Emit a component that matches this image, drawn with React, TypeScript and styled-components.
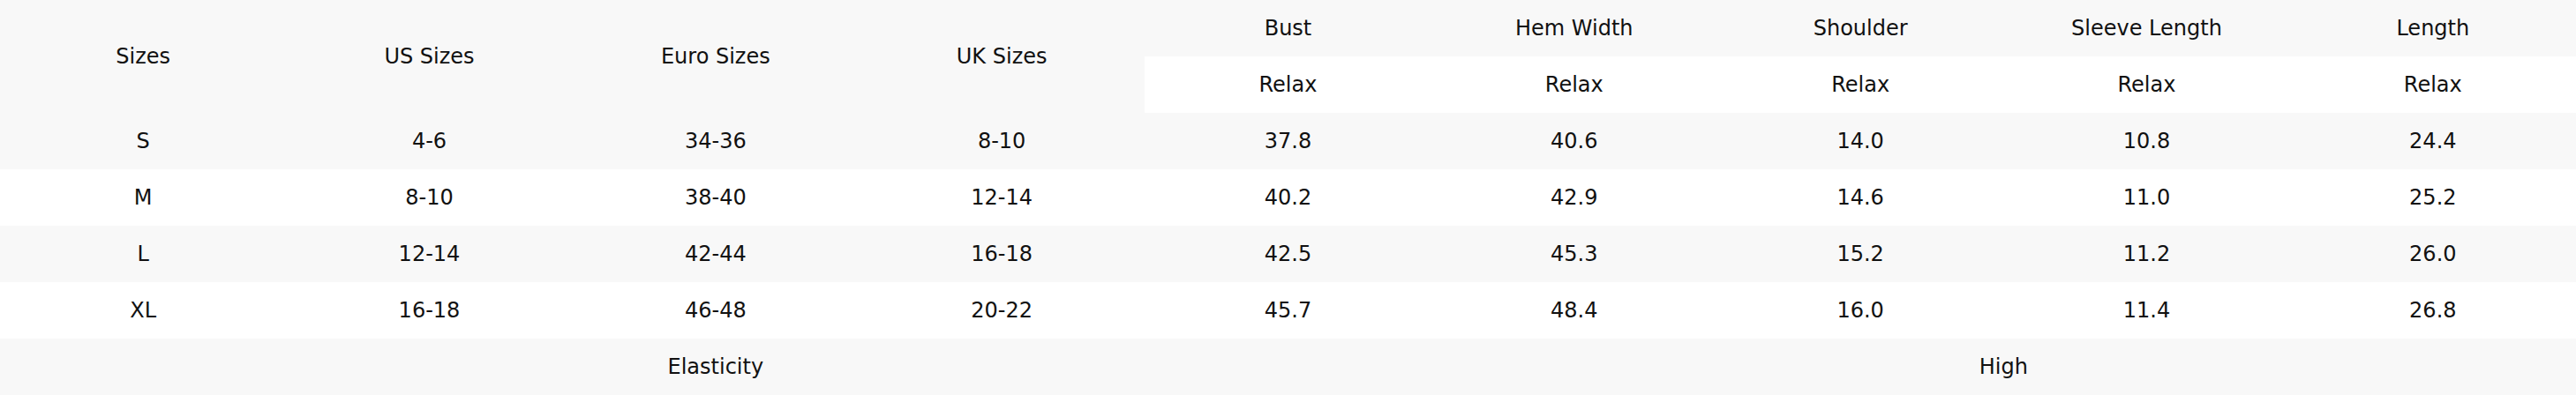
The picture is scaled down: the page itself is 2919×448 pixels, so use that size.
import styled, { createGlobalStyle } from "styled-components";

const GlobalStyle = createGlobalStyle`
  html, body {
    margin: 0;
    padding: 0;
    background: #ffffff;
  }
  body {
    font-family: "DejaVu Sans", "Liberation Sans", sans-serif;
    color: #111;
  }
`;

const measures = ["Bust", "Hem Width", "Shoulder", "Sleeve Length", "Length"];

const rows = [
  { size: "S", us: "4-6", euro: "34-36", uk: "8-10", values: ["37.8", "40.6", "14.0", "10.8", "24.4"] },
  { size: "M", us: "8-10", euro: "38-40", uk: "12-14", values: ["40.2", "42.9", "14.6", "11.0", "25.2"] },
  { size: "L", us: "12-14", euro: "42-44", uk: "16-18", values: ["42.5", "45.3", "15.2", "11.2", "26.0"] },
  { size: "XL", us: "16-18", euro: "46-48", uk: "20-22", values: ["45.7", "48.4", "16.0", "11.4", "26.8"] },
];

const SizeTable = styled.table`
  width: 100%;
  table-layout: fixed;
  border-collapse: collapse;
  border-spacing: 0;
  font-size: 24px;
`;

const Row = styled.tr<{ $shade?: boolean }>`
  background: ${(p) => (p.$shade ? "#f8f8f8" : "#ffffff")};
`;

const Cell = styled.td<{ $white?: boolean }>`
  height: 64px;
  padding: 0;
  text-align: center;
  vertical-align: middle;
  font-weight: normal;
  line-height: 1;
  ${(p) => (p.$white ? "background: #ffffff;" : "")}
`;

const HeadCell = styled(Cell).attrs({ as: "th" })``;

export default function App() {
  return (
    <>
      <GlobalStyle />
      <SizeTable>
        <thead>
          <Row $shade>
            <HeadCell rowSpan={2}>Sizes</HeadCell>
            <HeadCell rowSpan={2}>US Sizes</HeadCell>
            <HeadCell rowSpan={2}>Euro Sizes</HeadCell>
            <HeadCell rowSpan={2}>UK Sizes</HeadCell>
            {measures.map((m) => (
              <HeadCell key={m}>{m}</HeadCell>
            ))}
          </Row>
          <Row $shade>
            {measures.map((m) => (
              <HeadCell key={m} $white>
                Relax
              </HeadCell>
            ))}
          </Row>
        </thead>
        <tbody>
          {rows.map((r, i) => (
            <Row key={r.size} $shade={i % 2 === 0}>
              <Cell>{r.size}</Cell>
              <Cell>{r.us}</Cell>
              <Cell>{r.euro}</Cell>
              <Cell>{r.uk}</Cell>
              {r.values.map((v, j) => (
                <Cell key={j}>{v}</Cell>
              ))}
            </Row>
          ))}
          <Row $shade>
            <Cell colSpan={5}>Elasticity</Cell>
            <Cell colSpan={4}>High</Cell>
          </Row>
        </tbody>
      </SizeTable>
    </>
  );
}
